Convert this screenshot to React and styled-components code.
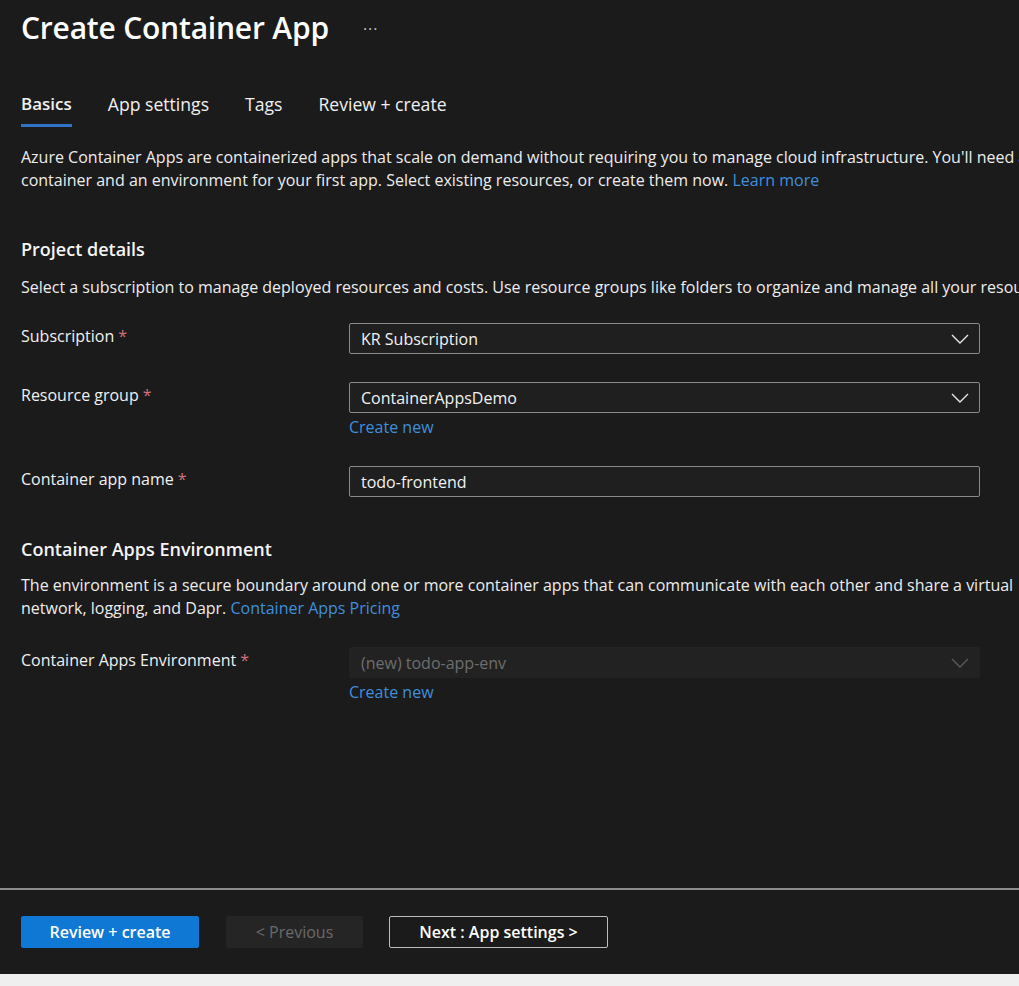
import React from "react";
import styled, { createGlobalStyle } from "styled-components";

const Global = createGlobalStyle`
  html, body { margin: 0; padding: 0; background: #1b1b1b; overflow: hidden; }
  body { font-family: "Open Sans", "Noto Sans", sans-serif; color: #f2f2f2; }
  * { box-sizing: border-box; }
`;

const Page = styled.div`
  width: 1019px;
  height: 986px;
  display: flex;
  flex-direction: column;
  overflow: hidden;
`;

const Main = styled.main`
  flex: 1;
  padding: 6px 0 0 21px;
  width: 1100px;
`;

const TitleRow = styled.div`
  display: flex;
  align-items: center;
  gap: 34px;
  height: 42px;
`;

const Title = styled.h1`
  margin: 0;
  font-size: 30px;
  font-weight: 600;
  letter-spacing: -0.2px;
  color: #ffffff;
`;

const Ellipsis = styled.span`
  font-size: 16px;
  color: #bdbdbd;
  margin-top: 4px;
  letter-spacing: 1px;
`;

const Tabs = styled.nav`
  display: flex;
  gap: 36px;
  margin-top: 45px;
`;

const Tab = styled.div`
  font-size: ${(p) => (p.$active ? "17px" : "17.6px")};
  color: #f0f0f0;
  font-weight: ${(p) => (p.$active ? 600 : 400)};
  padding-bottom: 9px;
  border-bottom: 3px solid ${(p) => (p.$active ? "#2f73c7" : "transparent")};
  line-height: 22px;
`;

const Para = styled.p`
  margin: ${(p) => p.$mt || "0"} 0 0;
  font-size: 16px;
  line-height: 23px;
  color: #ededed;
  white-space: nowrap;
`;

const Line = styled.span`
  display: block;
`;

const Link = styled.a`
  color: #3f8fdc;
  text-decoration: none;
`;

const SectionTitle = styled.h2`
  margin: ${(p) => p.$mt} 0 0;
  font-size: 18px;
  font-weight: 600;
  color: #f4f4f4;
  line-height: 24px;
`;

const FormRow = styled.div`
  display: grid;
  grid-template-columns: 328px 631px;
  margin-top: ${(p) => p.$mt};
`;

const Label = styled.label`
  font-size: 16px;
  line-height: 24px;
  color: #f0f0f0;
  padding-top: 1px;
`;

const Star = styled.span`
  color: #d4707e;
  margin-left: 4px;
`;

const Field = styled.div`
  display: flex;
  flex-direction: column;
  align-items: flex-start;
`;

const Box = styled.div`
  width: 100%;
  height: 31px;
  display: flex;
  align-items: center;
  justify-content: space-between;
  padding: 0 10px 0 11px;
  border-radius: 2px;
  font-size: 16px;
  color: ${(p) => (p.$disabled ? "#6e6e6e" : "#f2f2f2")};
  background: ${(p) => (p.$disabled ? "#222222" : "#1f1f1f")};
  border: 1px solid ${(p) => (p.$disabled ? "#222222" : "#8a8a8a")};
`;

const SubLink = styled(Link)`
  font-size: 16px;
  line-height: 24px;
  margin-top: 2px;
`;

const Chevron = ({ color }) => (
  <svg width="18" height="10" viewBox="0 0 18 10" fill="none">
    <path d="M1 1l8 8 8-8" stroke={color} strokeWidth="1.4" />
  </svg>
);

const Footer = styled.footer`
  height: 86px;
  border-top: 2px solid #8c8c8c;
  display: flex;
  align-items: center;
  padding: 0 0 0 21px;
`;

const Button = styled.button`
  height: 32px;
  font-family: inherit;
  font-size: 16px;
  font-weight: 600;
  border-radius: 2px;
  padding: 0;
  width: ${(p) => p.$w}px;
  margin-right: ${(p) => p.$mr || 0}px;
  cursor: pointer;
  ${(p) =>
    p.$variant === "primary"
      ? `background:#0f78d4;border:1px solid #0f78d4;color:#fff;`
      : p.$variant === "disabled"
      ? `background:#252525;border:1px solid #252525;color:#6a6a6a;font-weight:400;`
      : `background:#1b1b1b;border:1px solid #bdbdbd;color:#fff;`}
`;

const Strip = styled.div`
  height: 12px;
  background: #efefef;
`;

export default function App() {
  return (
    <>
      <Global />
      <Page>
        <Main>
          <TitleRow>
            <Title>Create Container App</Title>
            <Ellipsis>···</Ellipsis>
          </TitleRow>
          <Tabs>
            <Tab $active>Basics</Tab>
            <Tab>App settings</Tab>
            <Tab>Tags</Tab>
            <Tab>Review + create</Tab>
          </Tabs>
          <Para $mt="19px">
            <Line>
              Azure Container Apps are containerized apps that scale on demand without requiring you to manage cloud infrastructure. You'll need a
            </Line>
            <Line>
              container and an environment for your first app. Select existing resources, or create them now. <Link>Learn more</Link>
            </Line>
          </Para>
          <SectionTitle $mt="45px">Project details</SectionTitle>
          <Para $mt="15px">
            Select a subscription to manage deployed resources and costs. Use resource groups like folders to organize and manage all your resources.
          </Para>
          <FormRow $mt="24px">
            <Label>
              Subscription<Star>*</Star>
            </Label>
            <Field>
              <Box>
                KR Subscription <Chevron color="#e6e6e6" />
              </Box>
            </Field>
          </FormRow>
          <FormRow $mt="28px">
            <Label>
              Resource group<Star>*</Star>
            </Label>
            <Field>
              <Box>
                ContainerAppsDemo <Chevron color="#e6e6e6" />
              </Box>
              <SubLink>Create new</SubLink>
            </Field>
          </FormRow>
          <FormRow $mt="27px">
            <Label>
              Container app name<Star>*</Star>
            </Label>
            <Field>
              <Box>todo-frontend</Box>
            </Field>
          </FormRow>
          <SectionTitle $mt="40px">Container Apps Environment</SectionTitle>
          <Para $mt="13px">
            <Line>
              The environment is a secure boundary around one or more container apps that can communicate with each other and share a virtual
            </Line>
            <Line>
              network, logging, and Dapr. <Link>Container Apps Pricing</Link>
            </Line>
          </Para>
          <FormRow $mt="27px">
            <Label>
              Container Apps Environment<Star>*</Star>
            </Label>
            <Field>
              <Box $disabled>
                (new) todo-app-env <Chevron color="#5a5a5a" />
              </Box>
              <SubLink>Create new</SubLink>
            </Field>
          </FormRow>
        </Main>
        <Footer>
          <Button $variant="primary" $w={178} $mr={27}>Review + create</Button>
          <Button $variant="disabled" $w={137} $mr={26}>&lt; Previous</Button>
          <Button $variant="secondary" $w={219}>Next : App settings &gt;</Button>
        </Footer>
        <Strip />
      </Page>
    </>
  );
}
